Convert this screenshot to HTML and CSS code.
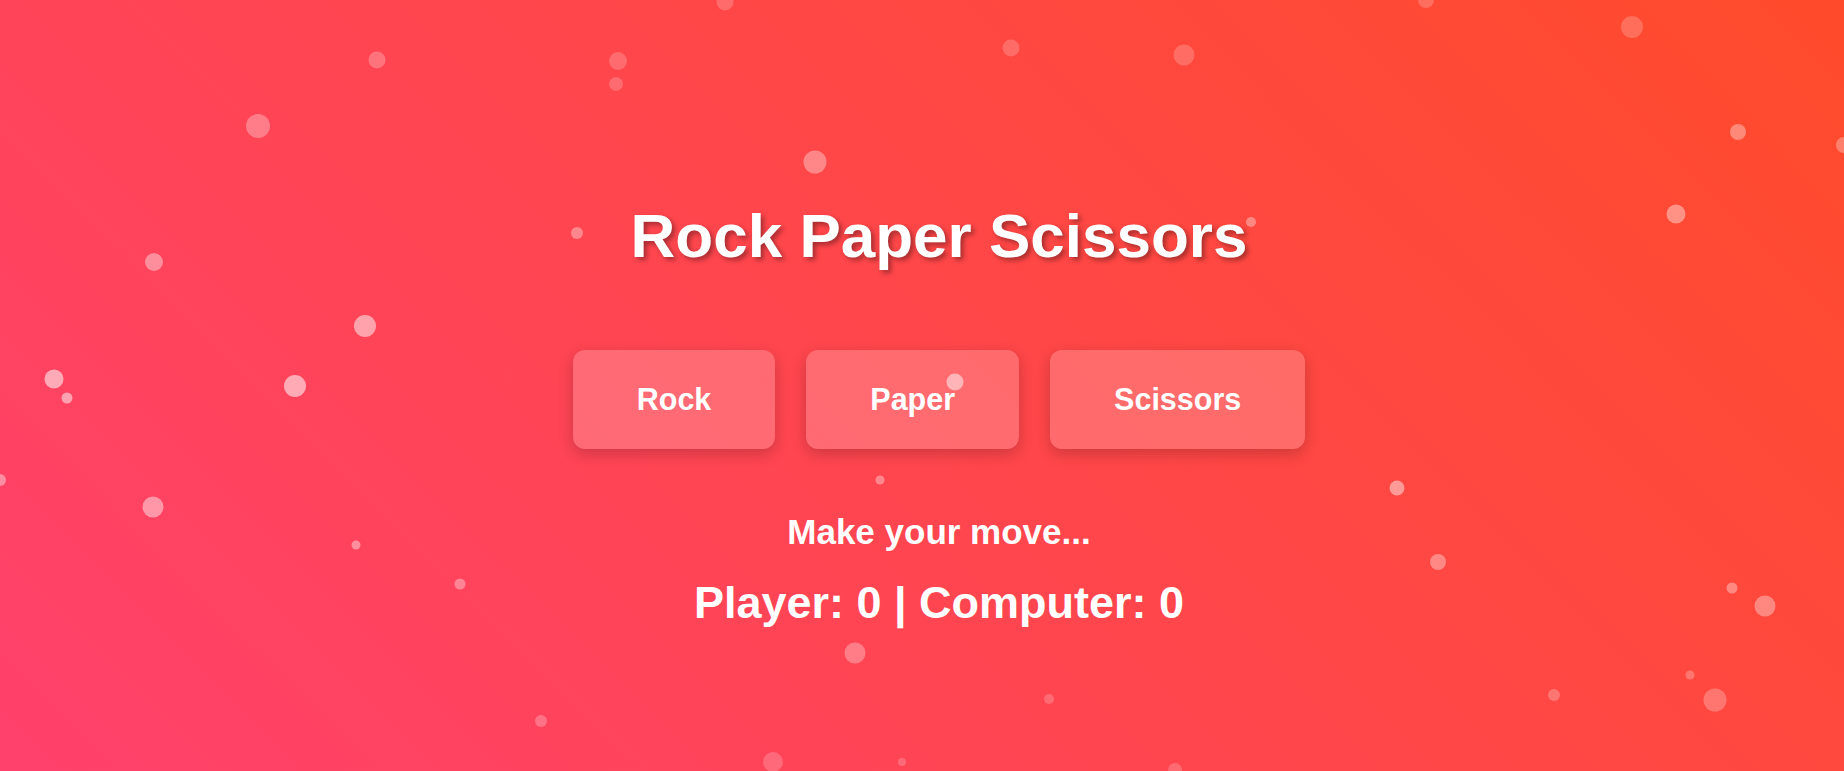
FILE: index.html
```html
<!DOCTYPE html>
<html lang="en">
<head>
<meta charset="utf-8">
<title>Rock Paper Scissors</title>
<link rel="stylesheet" href="styles.css">
</head>
<body>
<div class="particles">
  <span class="particle" style="left:725px;top:2px;width:17px;height:17px;opacity:.2"></span>
  <span class="particle" style="left:618px;top:61px;width:18px;height:18px;opacity:.2"></span>
  <span class="particle" style="left:616px;top:84px;width:14px;height:14px;opacity:.2"></span>
  <span class="particle" style="left:815px;top:162px;width:23px;height:23px;opacity:.35"></span>
  <span class="particle" style="left:1011px;top:48px;width:17px;height:17px;opacity:.2"></span>
  <span class="particle" style="left:1184px;top:55px;width:21px;height:21px;opacity:.2"></span>
  <span class="particle" style="left:1426px;top:0px;width:16px;height:16px;opacity:.2"></span>
  <span class="particle" style="left:377px;top:60px;width:17px;height:17px;opacity:.25"></span>
  <span class="particle" style="left:258px;top:126px;width:24px;height:24px;opacity:.3"></span>
  <span class="particle" style="left:154px;top:262px;width:18px;height:18px;opacity:.4"></span>
  <span class="particle" style="left:365px;top:326px;width:22px;height:22px;opacity:.5"></span>
  <span class="particle" style="left:54px;top:379px;width:19px;height:19px;opacity:.55"></span>
  <span class="particle" style="left:67px;top:398px;width:11px;height:11px;opacity:.5"></span>
  <span class="particle" style="left:295px;top:386px;width:22px;height:22px;opacity:.55"></span>
  <span class="particle" style="left:0px;top:480px;width:12px;height:12px;opacity:.4"></span>
  <span class="particle" style="left:153px;top:507px;width:21px;height:21px;opacity:.45"></span>
  <span class="particle" style="left:356px;top:545px;width:9px;height:9px;opacity:.4"></span>
  <span class="particle" style="left:577px;top:233px;width:12px;height:12px;opacity:.35"></span>
  <span class="particle" style="left:1251px;top:222px;width:10px;height:10px;opacity:.35"></span>
  <span class="particle" style="left:955px;top:382px;width:17px;height:17px;opacity:.5"></span>
  <span class="particle" style="left:880px;top:480px;width:9px;height:9px;opacity:.35"></span>
  <span class="particle" style="left:1397px;top:488px;width:15px;height:15px;opacity:.45"></span>
  <span class="particle" style="left:1438px;top:562px;width:16px;height:16px;opacity:.35"></span>
  <span class="particle" style="left:460px;top:584px;width:11px;height:11px;opacity:.35"></span>
  <span class="particle" style="left:1732px;top:588px;width:11px;height:11px;opacity:.35"></span>
  <span class="particle" style="left:1765px;top:606px;width:21px;height:21px;opacity:.35"></span>
  <span class="particle" style="left:1690px;top:675px;width:9px;height:9px;opacity:.25"></span>
  <span class="particle" style="left:1715px;top:700px;width:23px;height:23px;opacity:.25"></span>
  <span class="particle" style="left:1554px;top:695px;width:12px;height:12px;opacity:.25"></span>
  <span class="particle" style="left:1632px;top:27px;width:22px;height:22px;opacity:.2"></span>
  <span class="particle" style="left:1738px;top:132px;width:16px;height:16px;opacity:.35"></span>
  <span class="particle" style="left:1676px;top:214px;width:19px;height:19px;opacity:.4"></span>
  <span class="particle" style="left:1844px;top:145px;width:16px;height:16px;opacity:.3"></span>
  <span class="particle" style="left:855px;top:653px;width:21px;height:21px;opacity:.3"></span>
  <span class="particle" style="left:1049px;top:699px;width:10px;height:10px;opacity:.2"></span>
  <span class="particle" style="left:541px;top:721px;width:12px;height:12px;opacity:.25"></span>
  <span class="particle" style="left:773px;top:762px;width:20px;height:20px;opacity:.2"></span>
  <span class="particle" style="left:902px;top:762px;width:8px;height:8px;opacity:.2"></span>
  <span class="particle" style="left:1175px;top:770px;width:14px;height:14px;opacity:.2"></span>
</div>

<main class="game">
  <h1 class="title">Rock Paper Scissors</h1>
  <div class="choices">
    <button class="choice">Rock</button>
    <button class="choice">Paper</button>
    <button class="choice">Scissors</button>
  </div>
  <p class="message">Make your move...</p>
  <p class="score">Player: 0 | Computer: 0</p>
</main>
</body>
</html>
```

FILE: styles.css
```css
html, body {
  margin: 0;
  height: 100%;
}

body {
  position: relative;
  overflow: hidden;
  background: linear-gradient(45deg, #ff416c, #ff4b2b);
  font-family: "Liberation Sans", Arial, sans-serif;
  color: #fff;
}

.particles {
  position: absolute;
  inset: 0;
  pointer-events: none;
}

.particle {
  position: absolute;
  display: block;
  border-radius: 50%;
  background: #fff;
  transform: translate(-50%, -50%);
}

.game {
  position: relative;
  display: flex;
  flex-direction: column;
  align-items: center;
  padding: 200px 0 0 34px;
  text-align: center;
}

.title {
  margin: 0 0 79px;
  font-size: 62px;
  font-weight: bold;
  line-height: normal;
  text-shadow: 3px 3px 5px rgba(0, 0, 0, 0.35);
}

.choices {
  display: flex;
  gap: 31px;
}

.choice {
  padding: 32px 64px;
  border: none;
  border-radius: 12px;
  background: rgba(255, 255, 255, 0.2);
  box-shadow: 0 5px 15px rgba(0, 0, 0, 0.2);
  color: #fff;
  font-family: "Liberation Sans", Arial, sans-serif;
  font-size: 30.5px;
  font-weight: bold;
  line-height: normal;
  cursor: pointer;
}

.message {
  margin: 63px 0 0;
  font-size: 35px;
  font-weight: bold;
  line-height: normal;
}

.score {
  margin: 25px 0 0;
  font-size: 45px;
  font-weight: bold;
  line-height: normal;
}
```
